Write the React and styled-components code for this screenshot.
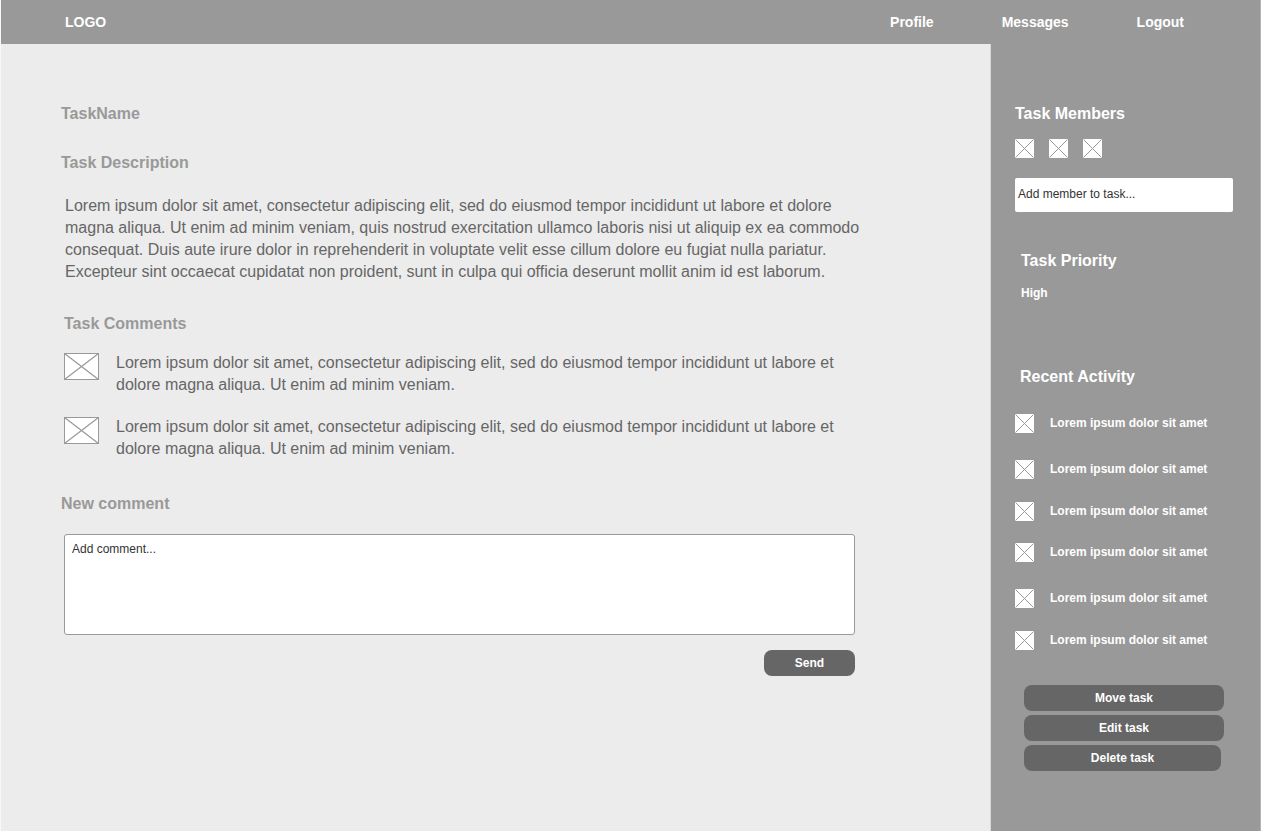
import React from "react";
import styled, { createGlobalStyle } from "styled-components";

const GlobalStyle = createGlobalStyle`
  *, *::before, *::after { box-sizing: border-box; }
  body {
    margin: 0;
    background: #ececec;
    font-family: "Liberation Sans", Arial, sans-serif;
    font-size: 16px;
  }
  h1, h2, p, ul { margin: 0; padding: 0; }
  ul { list-style: none; }
  input, textarea, button { font-family: inherit; }
`;

const Page = styled.div`
  min-height: 100vh;
  display: flex;
  flex-direction: column;
  border-left: 1px solid #f8f8f8;
  border-right: 1px solid #b4b4b4;
`;

const Header = styled.header`
  height: 44px;
  flex: none;
  display: flex;
  align-items: center;
  justify-content: space-between;
  padding: 0 76px 0 64px;
  background: #999;
  font-size: 14px;
  font-weight: bold;
`;

const HeaderLink = styled.a`
  color: #fff;
  text-decoration: none;
`;

const Nav = styled.nav`
  display: flex;
  gap: 68px;
`;

const Body = styled.div`
  flex: 1;
  display: flex;
`;

const Main = styled.main`
  flex: 1;
  min-width: 0;
  padding: 60px;
  border-right: 1px solid #d8d8d8;
`;

const Column = styled.div`
  max-width: 800px;
`;

const Heading = styled.h2`
  font-size: 16px;
  line-height: 20px;
  font-weight: bold;
  color: ${(p) => (p.$light ? "#fff" : "#999")};
`;

const Section = styled.section`
  margin-top: ${(p) => p.$space}px;
  padding-left: ${(p) => p.$inset || 0}px;
`;

const Text = styled.p`
  font-size: 16px;
  line-height: 22px;
  color: #666;
`;

const Description = styled(Text)`
  margin-top: 22px;
  padding-left: 4px;
`;

const CommentList = styled.ul`
  display: flex;
  flex-direction: column;
  gap: 20px;
  margin-top: 18px;
  padding-right: 15px;
`;

const Comment = styled.li`
  display: flex;
  align-items: flex-start;
  gap: 17px;
`;

const CommentPicture = styled.svg`
  flex: none;
  display: block;
  width: 35px;
  height: 27px;
  margin-top: 1px;
`;

const CommentForm = styled.form`
  display: flex;
  flex-direction: column;
  align-items: flex-end;
  gap: 15px;
  margin-top: 20px;
  padding: 0 6px 0 3px;
`;

const CommentBox = styled.textarea`
  display: block;
  width: 100%;
  height: 101px;
  padding: 6px 7px;
  border: 1px solid #999;
  border-radius: 3px;
  background: #fff;
  color: #333;
  font-size: 12px;
  line-height: 16px;
  resize: none;
  &::placeholder { color: #333; opacity: 1; }
`;

const Button = styled.button`
  width: ${(p) => p.$width}px;
  height: 26px;
  padding: 0;
  border: 0;
  border-radius: 8px;
  background: #666;
  color: #fff;
  font-size: 12px;
  font-weight: bold;
  cursor: pointer;
`;

const Sidebar = styled.aside`
  flex: none;
  width: 269px;
  padding: 60px 27px 60px 24px;
  background: #999;
  color: #fff;
`;

const MemberRow = styled.ul`
  display: flex;
  gap: 15px;
  margin-top: 15px;
`;

const Thumb = styled.svg`
  flex: none;
  display: block;
  width: 19px;
  height: 19px;
`;

const MemberInput = styled.input`
  display: block;
  width: 100%;
  height: 34px;
  margin-top: 20px;
  padding: 0 3px 2px;
  border: 0;
  border-radius: 2px;
  background: #fff;
  color: #333;
  font-size: 12px;
  &::placeholder { color: #333; opacity: 1; }
`;

const Priority = styled.p`
  margin-top: 14px;
  font-size: 12px;
  line-height: 16px;
  font-weight: bold;
`;

const SidebarHeading = styled(Heading)`
  padding-left: 5px;
`;

const ActivityList = styled.ul`
  margin-top: 27px;
`;

const Activity = styled.li`
  height: 19px;
  display: flex;
  align-items: center;
  gap: 16px;
  font-size: 12px;
  line-height: 19px;
  font-weight: bold;
  margin-bottom: 23px;
  &:nth-child(3n + 1) { margin-bottom: 27px; }
  &:nth-child(3n) { margin-bottom: 22px; }
`;

const Actions = styled.div`
  display: flex;
  flex-direction: column;
  gap: 4px;
  margin-top: 35px;
  padding-left: 9px;
`;

const members = ["Member 1", "Member 2", "Member 3"];
const comment =
  "Lorem ipsum dolor sit amet, consectetur adipiscing elit, sed do eiusmod tempor incididunt ut labore et dolore magna aliqua. Ut enim ad minim veniam.";
const comments = [comment, comment];
const activities = Array(6).fill("Lorem ipsum dolor sit amet");

function SmallImage() {
  return (
    <Thumb viewBox="0 0 19 19" aria-hidden="true">
      <rect width="19" height="19" fill="#fff" />
      <path d="M0.5 0.5L18.5 18.5M18.5 0.5L0.5 18.5" stroke="#999" strokeWidth="1" />
    </Thumb>
  );
}

function CommentImage() {
  return (
    <CommentPicture viewBox="0 0 35 27" aria-hidden="true">
      <rect x="0.5" y="0.5" width="34" height="26" fill="#fff" stroke="#999" />
      <path d="M0.5 0.5L34.5 26.5M34.5 0.5L0.5 26.5" stroke="#999" strokeWidth="1.2" />
    </CommentPicture>
  );
}

export default function App() {
  return (
    <Page>
      <GlobalStyle />
      <Header>
        <HeaderLink href="#home">LOGO</HeaderLink>
        <Nav>
          <HeaderLink href="#profile">Profile</HeaderLink>
          <HeaderLink href="#messages">Messages</HeaderLink>
          <HeaderLink href="#logout">Logout</HeaderLink>
        </Nav>
      </Header>
      <Body>
        <Main>
          <Column>
            <Heading as="h1">TaskName</Heading>
            <Section $space={29}>
              <Heading>Task Description</Heading>
              <Description>
                Lorem ipsum dolor sit amet, consectetur adipiscing elit, sed do eiusmod tempor
                incididunt ut labore et dolore magna aliqua. Ut enim ad minim veniam, quis nostrud
                exercitation ullamco laboris nisi ut aliquip ex ea commodo consequat. Duis aute
                irure dolor in reprehenderit in voluptate velit esse cillum dolore eu fugiat nulla
                pariatur. Excepteur sint occaecat cupidatat non proident, sunt in culpa qui officia
                deserunt mollit anim id est laborum.
              </Description>
            </Section>
            <Section $space={31} $inset={3}>
              <Heading>Task Comments</Heading>
              <CommentList>
                {comments.map((text, i) => (
                  <Comment key={i}>
                    <CommentImage />
                    <Text>{text}</Text>
                  </Comment>
                ))}
              </CommentList>
            </Section>
            <Section $space={34}>
              <Heading>
                <label htmlFor="comment">New comment</label>
              </Heading>
              <CommentForm onSubmit={(e) => e.preventDefault()}>
                <CommentBox id="comment" placeholder="Add comment..." />
                <Button type="submit" $width={91}>Send</Button>
              </CommentForm>
            </Section>
          </Column>
        </Main>
        <Sidebar>
          <Heading $light>
            <label htmlFor="member">Task Members</label>
          </Heading>
          <MemberRow>
            {members.map((name) => (
              <li key={name}>
                <SmallImage />
              </li>
            ))}
          </MemberRow>
          <MemberInput id="member" type="text" placeholder="Add member to task..." />
          <Section $space={39} $inset={6}>
            <Heading $light>Task Priority</Heading>
            <Priority>High</Priority>
          </Section>
          <Section $space={66}>
            <SidebarHeading $light>Recent Activity</SidebarHeading>
            <ActivityList>
              {activities.map((text, i) => (
                <Activity key={i}>
                  <SmallImage />
                  {text}
                </Activity>
              ))}
            </ActivityList>
          </Section>
          <Actions>
            <Button type="button" $width={200}>Move task</Button>
            <Button type="button" $width={200}>Edit task</Button>
            <Button type="button" $width={197}>Delete task</Button>
          </Actions>
        </Sidebar>
      </Body>
    </Page>
  );
}
